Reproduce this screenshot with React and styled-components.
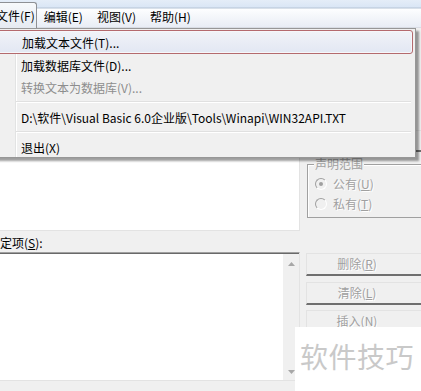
import React from 'react';
import styled, { createGlobalStyle } from 'styled-components';

const GlobalStyle = createGlobalStyle`
  html, body {
    margin: 0;
    padding: 0;
    background: #f0f0f0;
  }
  body {
    font-family: "Noto Sans CJK SC", "Noto Sans", sans-serif;
    font-size: 12px;
  }
`;

const Window = styled.div`
  position: relative;
  width: 421px;
  height: 391px;
  overflow: hidden;
  background: #f0f0f0;
`;

const MenuBar = styled.div`
  display: flex;
  align-items: flex-end;
  height: 28px;
  background: linear-gradient(
    to bottom,
    #e4edf8 0,
    #dae6f5 7px,
    #b3c2d4 8px,
    #fdfeff 9px,
    #f7f9fc 14px,
    #e9edf5 27px,
    #c8ccd4 28px
  );
`;

const BarItem = styled.div`
  display: flex;
  align-items: center;
  height: ${(p) => (p.$open ? '25px' : '20px')};
  padding: ${(p) => (p.$open ? '0 1px 0 5px' : '0 7px')};
  margin-left: ${(p) => (p.$first ? '-10px' : '0')};
  margin-bottom: ${(p) => (p.$open ? '0' : '2px')};
  color: #000;
  white-space: nowrap;
  ${(p) =>
    p.$open &&
    `
    border: 1px solid #8e9094;
    border-bottom: none;
    border-radius: 3px 3px 0 0;
    background: linear-gradient(to bottom, #f7f9fb, #e6ebf2);
  `}
`;

const Body = styled.div`
  display: flex;
  align-items: flex-start;
  gap: 6px;
  padding-top: 8px;
`;

const LeftColumn = styled.div`
  display: flex;
  flex-direction: column;
  width: 300px;
  flex-shrink: 0;
`;

const TopList = styled.div`
  height: 194px;
  background: #fff;
  border-right: 1px solid #e3e3e3;
  border-bottom: 1px solid #e3e3e3;
`;

const FieldLabel = styled.div`
  height: 21px;
  line-height: 23px;
  color: #000;
  white-space: nowrap;
`;

const BottomList = styled.div`
  display: flex;
  justify-content: flex-end;
  height: 127px;
  background: #fff;
  border-top: 1px solid #a0a0a0;
  border-right: 1px solid #e3e3e3;
  border-bottom: 1px solid #e3e3e3;
  box-shadow: inset 0 1px 0 #696969;
`;

const ScrollBar = styled.div`
  display: flex;
  flex-direction: column;
  justify-content: space-between;
  align-items: center;
  width: 16px;
  padding: 8px 0 6px;
  margin-top: 1px;
  background: #f0f0f0;
`;

const RightColumn = styled.div`
  display: flex;
  flex-direction: column;
  width: 124px;
  flex-shrink: 0;
`;

const Button = styled.div`
  display: flex;
  align-items: center;
  justify-content: center;
  box-sizing: border-box;
  height: ${(p) => p.$h || 23}px;
  padding-right: 22px;
  margin-top: ${(p) => p.$top || 0}px;
  background: #f0f0f0;
  border: 1px solid #e3e3e3;
  border-bottom: 2px solid #6f6f6f;
  color: #a0a0a0;
  text-shadow: 1px 1px 0 #fff;
  line-height: 14px;
  white-space: nowrap;
`;

const GroupBox = styled.div`
  display: flex;
  flex-direction: column;
  box-sizing: border-box;
  height: 54px;
  margin-top: 12px;
  margin-left: 1px;
  padding: 0 0 0 6px;
  border: 1px solid #a0a0a0;
  box-shadow: inset 1px 1px 0 #fff;
`;

const Legend = styled.div`
  align-self: flex-start;
  margin: -8px 0 3px;
  padding: 0 1px;
  height: 14px;
  line-height: 14px;
  background: #f0f0f0;
  color: #a0a0a0;
`;

const RadioRow = styled.div`
  display: flex;
  align-items: center;
  gap: 6px;
  height: 20px;
  flex-shrink: 0;
  padding-left: 1px;
  line-height: 14px;
  color: #a0a0a0;
  text-shadow: 1px 1px 0 #fff;
`;

const RadioCircle = styled.span`
  display: flex;
  align-items: center;
  justify-content: center;
  box-sizing: border-box;
  width: 12px;
  height: 12px;
  border-radius: 50%;
  border: 1px solid;
  border-color: #a0a0a0 #fff #fff #a0a0a0;
  background: #f0f0f0;
  &::after {
    content: '';
    width: 4px;
    height: 4px;
    border-radius: 50%;
    background: ${(p) => (p.$checked ? '#a0a0a0' : 'transparent')};
  }
`;

const Dropdown = styled.div`
  position: absolute;
  left: -14px;
  top: 28px;
  width: 430px;
  height: 130px;
  box-sizing: border-box;
  padding: 1px 2px 0 2px;
  background: #f0f0f0;
  border: 1px solid #979797;
  box-shadow: 3px 3px 2px rgba(0, 0, 0, 0.38);
`;

const Gutter = styled.div`
  position: relative;
  height: 100%;
  &::before {
    content: '';
    position: absolute;
    left: 26px;
    top: 0;
    bottom: 0;
    width: 1px;
    background: #e2e3e3;
    box-shadow: 1px 0 0 #fff;
  }
`;

const Item = styled.div`
  position: relative;
  display: flex;
  align-items: center;
  box-sizing: border-box;
  height: ${(p) => (p.$active ? '24px' : '22px')};
  padding-left: 32px;
  color: ${(p) => (p.$disabled ? '#8d8d8d' : '#000')};
  white-space: nowrap;
  ${(p) =>
    p.$active &&
    `
    border: 1px solid #b46a6e;
    border-radius: 3px;
    background: linear-gradient(to bottom, #f1f3f8, #e2e7f3);
    box-shadow: inset 0 0 0 1px #f6f7fa;
  `}
`;

const Separator = styled.div`
  position: relative;
  height: 8px;
  margin-left: 27px;
  &::after {
    content: '';
    position: absolute;
    left: 0;
    right: 2px;
    top: 3px;
    height: 1px;
    background: #e0e0e0;
    box-shadow: 0 1px 0 #fff;
  }
`;

const Watermark = styled.div`
  position: absolute;
  left: 295px;
  top: 327px;
  right: 0;
  bottom: 0;
  display: flex;
  align-items: center;
  padding: 0 0 6px 5px;
  background: #fff;
  color: #c9c9c9;
  font-size: 28px;
  letter-spacing: 0.5px;
  white-space: nowrap;
`;

const Arrow = ({ down }) => (
  <svg width="7" height="4" viewBox="0 0 7 4">
    <polygon
      points={down ? '0,0 7,0 3.5,4' : '0,4 7,4 3.5,0'}
      fill="#a7a7a7"
    />
  </svg>
);

const menuItems = [
  { type: 'item', label: '加载文本文件(T)...', active: true },
  { type: 'item', label: '加载数据库文件(D)...' },
  { type: 'item', label: '转换文本为数据库(V)...', disabled: true },
  { type: 'sep' },
  { type: 'item', label: 'D:\\软件\\Visual Basic 6.0企业版\\Tools\\Winapi\\WIN32API.TXT' },
  { type: 'sep' },
  { type: 'item', label: '退出(X)' },
];

export default function App() {
  return (
    <>
      <GlobalStyle />
      <Window>
        <MenuBar>
          <BarItem $first $open>文件(F)</BarItem>
          <BarItem>编辑(E)</BarItem>
          <BarItem>视图(V)</BarItem>
          <BarItem>帮助(H)</BarItem>
        </MenuBar>

        <Body>
          <LeftColumn>
            <TopList />
            <FieldLabel>定项(<u>S</u>):</FieldLabel>
            <BottomList>
              <ScrollBar>
                <Arrow />
                <Arrow down />
              </ScrollBar>
            </BottomList>
          </LeftColumn>

          <RightColumn>
            <Button $top={94} $h={22}>添加(A)</Button>
            <GroupBox>
              <Legend>声明范围</Legend>
              <RadioRow>
                <RadioCircle $checked />
                <span>公有(<u>U</u>)</span>
              </RadioRow>
              <RadioRow>
                <RadioCircle />
                <span>私有(<u>T</u>)</span>
              </RadioRow>
            </GroupBox>
            <Button $top={35}>删除(<u>R</u>)</Button>
            <Button $top={6}>清除(<u>L</u>)</Button>
            <Button $top={5}>插入(<u>N</u>)</Button>
          </RightColumn>
        </Body>

        <Dropdown>
          <Gutter>
            {menuItems.map((m, i) =>
              m.type === 'sep' ? (
                <Separator key={i} />
              ) : (
                <Item key={i} $active={m.active} $disabled={m.disabled}>
                  {m.label}
                </Item>
              )
            )}
          </Gutter>
        </Dropdown>

        <Watermark>软件技巧</Watermark>
      </Window>
    </>
  );
}
